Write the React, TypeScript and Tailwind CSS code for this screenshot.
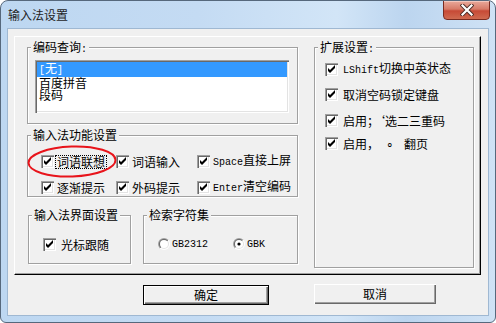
import React from 'react';

function L({ children }: { children: React.ReactNode }) {
  return <span className="font-['Liberation_Mono'] text-[10px]">{children}</span>;
}

function Check() {
  return (
    <span className="flex h-[13px] w-[13px] shrink-0 bg-white shadow-[inset_1px_1px_0_#a0a0a0,inset_2px_2px_0_#696969,inset_-1px_-1px_0_#ffffff,inset_-2px_-2px_0_#e3e3e3]">
      <svg viewBox="0 0 13 13" className="h-[13px] w-[13px]">
        <polygon points="3,5 5,7 10,2 10,5 5,10 3,8" fill="#000" />
      </svg>
    </span>
  );
}

function Radio({ on }: { on?: boolean }) {
  return (
    <svg width="12" height="12" viewBox="0 0 12 12" className="shrink-0">
      <defs>
        <linearGradient id="ro" x1="0" y1="0" x2="1" y2="1">
          <stop offset="0.5" stopColor="#a0a0a0" />
          <stop offset="0.5" stopColor="#ffffff" />
        </linearGradient>
        <linearGradient id="ri" x1="0" y1="0" x2="1" y2="1">
          <stop offset="0.5" stopColor="#696969" />
          <stop offset="0.5" stopColor="#e3e3e3" />
        </linearGradient>
      </defs>
      <circle cx="6" cy="6" r="6" fill="url(#ro)" />
      <circle cx="6" cy="6" r="5" fill="url(#ri)" />
      <circle cx="6" cy="6" r="4" fill="#fff" />
      {on && <circle cx="6" cy="6" r="1.6" fill="#000" />}
    </svg>
  );
}

function Group({ label, className, children }: { label: React.ReactNode; className: string; children?: React.ReactNode }) {
  return (
    <div className={`relative border border-[#a0a0a0] shadow-[inset_1px_1px_0_#fff,1px_1px_0_#fff] ${className}`}>
      <span className="absolute -top-[7px] left-[3px] bg-[#f0f0f0] px-[2px] leading-[12px]">{label}</span>
      {children}
    </div>
  );
}

function Opt({ children, focus }: { children: React.ReactNode; focus?: boolean }) {
  return (
    <div className="flex items-center gap-[1px]">
      <Check />
      <span className={`border px-[1px] leading-[12px] whitespace-nowrap ${focus ? 'border-dotted border-black' : 'border-transparent'}`}>
        {children}
      </span>
    </div>
  );
}

function Ext({ children }: { children: React.ReactNode }) {
  return (
    <div className="flex items-center gap-[5px]">
      <Check />
      <span className="leading-[12px] whitespace-nowrap">{children}</span>
    </div>
  );
}

export default function App() {
  return (
    <div className="relative flex h-[323px] w-[496px] flex-col overflow-hidden rounded-t-[8px] rounded-b-[6px] border border-[#56687c] bg-[linear-gradient(90deg,#bdd7f1_0%,#c4dbf3_40%,#d2e5f7_68%,#bcd5ef_82%,#cfe2f5_100%)] font-['Noto_Sans_CJK_SC',sans-serif] text-[12px] text-black">
      {/* title bar */}
      <div className="flex h-[27px] shrink-0 items-start justify-between">
        <span className="pl-[7px] pt-[8px] text-[12px] leading-[12px] text-[#1e1e1e]">输入法设置</span>
        <div className="-mt-[1px] mr-[5px] flex h-[20px] w-[47px] items-center justify-center rounded-b-[4px] border border-[#7a2b20] bg-[linear-gradient(180deg,#e9a99b_0%,#d77b68_45%,#c74a36_55%,#cf6a50_100%)] shadow-[inset_0_1px_0_#f3c7bd]">
          <svg width="14" height="12" viewBox="0 0 14 12">
            <path d="M2.5 1.5 L11.5 10.5 M11.5 1.5 L2.5 10.5" stroke="#4b2a24" strokeWidth="4" strokeLinecap="square" />
            <path d="M2.5 1.5 L11.5 10.5 M11.5 1.5 L2.5 10.5" stroke="#ffffff" strokeWidth="2.2" strokeLinecap="square" />
          </svg>
        </div>
      </div>

      {/* client area */}
      <div className="mx-[6px] h-[288px] shrink-0 border border-[#9fb8d2] bg-[#f0f0f0]">
        <div className="ml-[6px] mt-[7px] flex h-[239px] w-[467px] gap-[16px] border border-b-black border-l-white border-r-black border-t-white pl-[12px] pt-[10px] shadow-[inset_-1px_-1px_0_#a0a0a0]">
          {/* left column */}
          <div className="flex w-[271px] flex-col">
            <Group label={<>编码查询<L>: </L></>} className="h-[77px] w-[271px]">
              <div className="ml-[7px] mt-[12px] h-[53px] w-[254px] bg-white pl-[2px] pt-[2px] shadow-[inset_1px_1px_0_#a0a0a0,inset_2px_2px_0_#696969,inset_-1px_-1px_0_#ffffff,inset_-2px_-2px_0_#e3e3e3]">
                <div className="mr-[2px] bg-[#3399ff] pl-[2px] leading-[12px] text-white">
                  <L>[</L>无<L>]</L>
                </div>
                <div className="pl-[2px] leading-[12px]">百度拼音</div>
                <div className="pl-[2px] leading-[12px]">段码</div>
              </div>
            </Group>

            <Group label="输入法功能设置" className="mt-[11px] h-[62px] w-[271px]">
              <div className="grid grid-cols-[75px_81px_auto] gap-y-[9px] pl-[13px] pt-[17px]">
                <Opt focus>词语联想</Opt>
                <Opt>词语输入</Opt>
                <Opt><L>Space</L>直接上屏</Opt>
                <Opt>逐渐提示</Opt>
                <Opt>外码提示</Opt>
                <Opt><L>Enter</L>清空编码</Opt>
              </div>
            </Group>

            <div className="mt-[18px] flex gap-[12px]">
              <Group label="输入法界面设置" className="ml-[1px] h-[49px] w-[103px]">
                <div className="flex items-center gap-[5px] pl-[14px] pt-[22px]">
                  <Check />
                  <span className="leading-[12px]">光标跟随</span>
                </div>
              </Group>
              <Group label="检索字符集" className="h-[49px] w-[155px]">
                <div className="flex items-center pl-[14px] pt-[20px]">
                  <div className="flex w-[75px] items-center gap-[2px]">
                    <Radio />
                    <span className="leading-[12px]"><L>GB2312</L></span>
                  </div>
                  <div className="flex items-center gap-[2px]">
                    <Radio on />
                    <span className="leading-[12px]"><L>GBK</L></span>
                  </div>
                </div>
              </Group>
            </div>
          </div>

          {/* right column */}
          <Group label={<>扩展设置<L>: </L></>} className="h-[221px] w-[160px]">
            <div className="flex flex-col gap-[11px] pl-[10px] pt-[14px]">
              <Ext><L>LShift</L>切换中英状态</Ext>
              <Ext>取消空码锁定键盘</Ext>
              <div className="mt-[2px]">
                <Ext>启用；‘选二三重码</Ext>
              </div>
              <div className="-mt-[1px]">
                <Ext>启用，<span className="ml-[7px]">∘</span><span className="ml-[10px]">翻页</span></Ext>
              </div>
            </div>
          </Group>
        </div>

        {/* buttons */}
        <div className="ml-[135px] mt-[10px] flex items-start gap-[45px]">
          <button className="flex h-[20px] w-[126px] items-center justify-center border border-black bg-[#f0f0f0] leading-[12px] shadow-[inset_1px_1px_0_#fff,inset_-1px_-1px_0_#696969,inset_-2px_-2px_0_#a0a0a0]">
            确定
          </button>
          <button className="-mt-[1px] flex h-[20px] w-[122px] items-center justify-center bg-[#f0f0f0] leading-[12px] shadow-[inset_1px_1px_0_#fff,inset_-1px_-1px_0_#696969,inset_-2px_-2px_0_#a0a0a0]">
            取消
          </button>
        </div>
      </div>

      {/* red annotation ellipse */}
      <svg className="pointer-events-none absolute left-[25px] top-[143px]" width="92" height="36" viewBox="0 0 92 36">
        <ellipse cx="46" cy="17.5" rx="43.5" ry="15" fill="none" stroke="#e8141b" strokeWidth="2" transform="rotate(-2 46 17.5)" />
      </svg>
    </div>
  );
}
